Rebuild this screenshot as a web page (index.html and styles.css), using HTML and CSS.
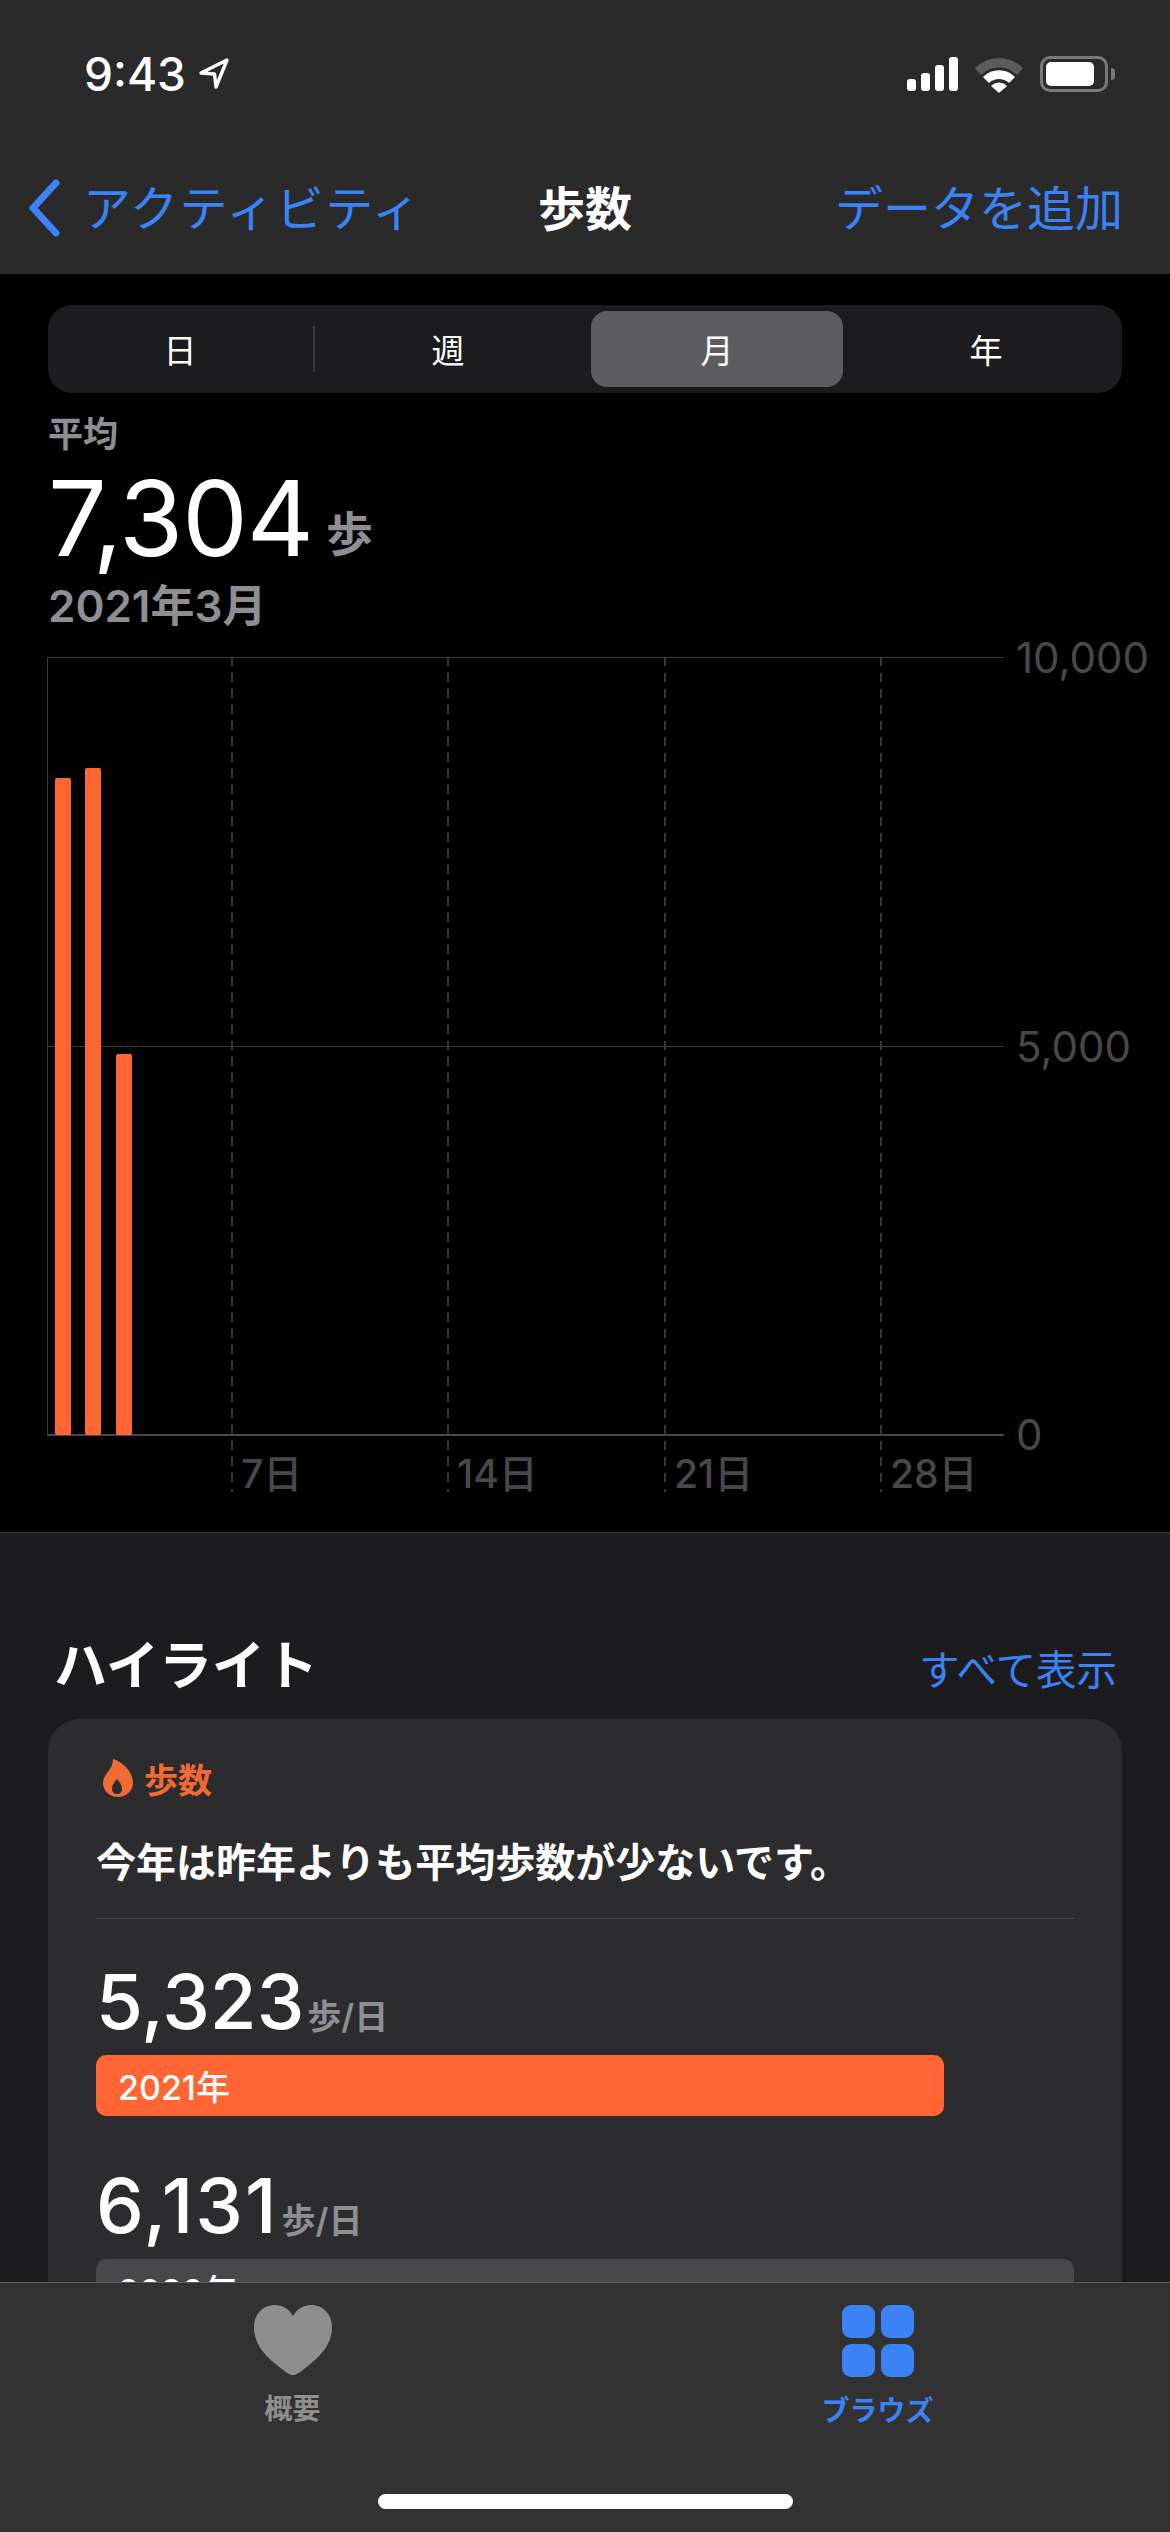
FILE: index.html
```html
<!DOCTYPE html>
<html lang="ja">
<head>
    <meta charset="UTF-8">
    <meta name="viewport" content="width=device-width, initial-scale=1.0">
    <title>歩数</title>
    <link rel="stylesheet" href="styles.css">
</head>
<body>
    <header class="topbar">
        <div class="status">
            <div class="status-time">
                <span>9:43</span>
                <svg width="32" height="32" viewBox="0 0 32 32"><path d="M29 2 L3 15 L16.5 16 L18 29 Z" fill="none" stroke="#fff" stroke-width="3.4" stroke-linejoin="round"/></svg>
            </div>
            <div class="status-icons">
                <div class="signal">
                    <span class="signal-bar signal-1"></span>
                    <span class="signal-bar signal-2"></span>
                    <span class="signal-bar signal-3"></span>
                    <span class="signal-bar signal-4"></span>
                </div>
                <svg class="wifi" width="48" height="37" viewBox="0 0 48 37">
                    <path d="M1 12 A34 34 0 0 1 47 12 L42 18 A26 26 0 0 0 6 18 Z" fill="#5c5c5c" stroke="#5c5c5c" stroke-width="1.5" stroke-linejoin="round"/>
                    <path d="M9 21 A22 22 0 0 1 39 21 L34 26 A15 15 0 0 0 14 26 Z" fill="#fff" stroke="#fff" stroke-width="1.5" stroke-linejoin="round"/>
                    <path d="M17 30 A10 10 0 0 1 31 30 L24 36 Z" fill="#fff" stroke="#fff" stroke-width="1.5" stroke-linejoin="round"/>
                </svg>
                <div class="battery"><span class="battery-fill"></span></div>
                <span class="battery-nub"></span>
            </div>
        </div>
        <nav class="navbar">
            <a class="nav-back">
                <svg width="34" height="58" viewBox="0 0 34 58"><path d="M29 4 L6 29 L29 54" fill="none" stroke="#3b82f6" stroke-width="7" stroke-linecap="round" stroke-linejoin="round"/></svg>
                <span>アクティビティ</span>
            </a>
            <h1 class="nav-title">歩数</h1>
            <a class="nav-add">データを追加</a>
        </nav>
    </header>

    <main class="content">
        <section class="chart-panel">
            <div class="segments">
                <div class="seg seg-day">日</div>
                <span class="seg-sep"></span>
                <div class="seg seg-week">週</div>
                <div class="seg seg-month">月</div>
                <div class="seg seg-year">年</div>
            </div>
            <div class="avg-label">平均</div>
            <div class="avg-value"><span class="avg-num">7,304</span><span class="avg-unit">歩</span></div>
            <div class="avg-date">2021年3月</div>

            <svg class="chart" width="1170" height="900" viewBox="0 0 1170 900">
                <line class="axis" x1="47.5" y1="25" x2="47.5" y2="803"/>
                <line class="grid" x1="47" y1="25.5" x2="1004" y2="25.5"/>
                <line class="grid" x1="47" y1="414.5" x2="1004" y2="414.5"/>
                <line class="grid grid-base" x1="47" y1="803" x2="1004" y2="803"/>
                <line class="dash" x1="232" y1="25" x2="232" y2="860"/>
                <line class="dash" x1="448" y1="25" x2="448" y2="860"/>
                <line class="dash" x1="665" y1="25" x2="665" y2="860"/>
                <line class="dash" x1="881" y1="25" x2="881" y2="860"/>
                <rect class="bar" x="55" y="146" width="16" height="657" rx="2"/>
                <rect class="bar" x="85" y="136" width="16" height="667" rx="2"/>
                <rect class="bar" x="116" y="422" width="16" height="381" rx="2"/>
                <text class="y-label" x="1016" y="41">10,000</text>
                <text class="y-label" x="1016" y="430">5,000</text>
                <text class="y-label" x="1016" y="818">0</text>
                <text class="x-label" x="241" y="856">7日</text>
                <text class="x-label" x="457" y="856">14日</text>
                <text class="x-label" x="674" y="856">21日</text>
                <text class="x-label" x="890" y="856">28日</text>
            </svg>
        </section>

        <section class="highlights">
            <div class="hl-head">
                <h2>ハイライト</h2>
                <a class="hl-all">すべて表示</a>
            </div>
            <div class="card">
                <div class="card-tag">
                    <svg width="30" height="38" viewBox="0 0 30 38"><path fill-rule="evenodd" d="M10 0 C20 3 30 13 30 24 C30 32 23 38 15 38 C7 38 0 32 0 24 C0 15 10 11 10 0 Z M14 20 C17 23 19 27 19 30 C19 33 17 35 14 35 C11 35 9 33 9 30 C9 27 11 23 14 20 Z" fill="#f26a33"/></svg>
                    <span>歩数</span>
                </div>
                <p class="card-text">今年は昨年よりも平均歩数が少ないです。</p>
                <div class="card-line"></div>

                <div class="stat">
                    <div class="stat-row"><span class="stat-num">5,323</span><span class="stat-unit">歩/日</span></div>
                    <div class="stat-bar stat-bar-now">2021年</div>
                </div>
                <div class="stat">
                    <div class="stat-row"><span class="stat-num stat-num-wide">6,131</span><span class="stat-unit">歩/日</span></div>
                    <div class="stat-bar stat-bar-old">2020年</div>
                </div>
            </div>
        </section>
    </main>

    <footer class="tabbar">
        <div class="tabs">
            <div class="tab">
                <svg width="78" height="70" viewBox="0 0 78 70"><path d="M39 70 C36 70 33 68 28 64 C12 52 0 40 0 22 C0 9 9 0 21 0 C29 0 35 4 39 11 C43 4 49 0 57 0 C69 0 78 9 78 22 C78 40 66 52 50 64 C45 68 42 70 39 70 Z" fill="#8e8e8e"/></svg>
                <span class="tab-label">概要</span>
            </div>
            <div class="tab tab-on">
                <div class="browse-icon">
                    <span></span><span></span><span></span><span></span>
                </div>
                <span class="tab-label">ブラウズ</span>
            </div>
        </div>
        <div class="home-bar"></div>
    </footer>
</body>
</html>
```

FILE: styles.css
```css
* { box-sizing: border-box; }
html, body { margin: 0; padding: 0; }
body { width: 1170px; height: 2532px; overflow: hidden; display: flex; flex-direction: column; background: #000; color: #fff; font-family: Inter, "Noto Sans CJK JP", sans-serif; }
h1, h2, p { margin: 0; }

/* top */
.topbar { background: #2a2a2a; height: 274px; flex: none; }
.status { height: 148px; display: flex; justify-content: space-between; align-items: center; padding: 0 55px 0 84px; }
.status-time { display: flex; align-items: center; gap: 12px; font-size: 46px; font-weight: 500; line-height: 1; }
.status-icons { display: flex; align-items: center; }
.signal { display: flex; align-items: flex-end; gap: 5px; height: 34px; margin-right: 17px; }
.signal-bar { width: 9px; background: #fff; border-radius: 3px; }
.signal-1 { height: 12px; }
.signal-2 { height: 18px; }
.signal-3 { height: 26px; }
.signal-4 { height: 34px; }
.wifi { margin-right: 17px; }
.battery { width: 68px; height: 36px; border: 3px solid #7a7a7a; border-radius: 10px; padding: 3px; }
.battery-fill { display: block; width: 48px; height: 24px; background: #fff; border-radius: 5px; }
.battery-nub { width: 4px; height: 12px; margin-left: 3px; background: #7a7a7a; border-radius: 0 6px 6px 0; }

.navbar { height: 126px; padding: 0 47px 12px 27px; display: grid; grid-template-columns: 511px 94px 1fr; align-items: center; }
.nav-back { display: flex; align-items: center; gap: 22px; color: #3b82f6; font-size: 48px; letter-spacing: 1.5px; white-space: nowrap; }
.nav-back svg { margin-top: 6px; }
.nav-title { font-size: 47px; font-weight: 700; }
.nav-add { justify-self: end; color: #3b82f6; font-size: 48px; white-space: nowrap; }

/* chart */
.content { flex: 1; min-height: 0; overflow: hidden; }
.chart-panel { background: #000; height: 1259px; padding-top: 31px; border-bottom: 1px solid #3a3a3c; }
.segments { margin: 0 48px; height: 88px; padding: 6px; background: #1c1c1e; border-radius: 24px; display: flex; align-items: center; font-size: 33px; }
.seg { height: 76px; display: flex; align-items: center; justify-content: center; }
.seg-day { width: 259px; padding-right: 7px; }
.seg-sep { width: 2px; height: 46px; background: #3a3a3c; }
.seg-week { width: 276px; padding-right: 10px; }
.seg-month { width: 252px; background: #5c5c60; border-radius: 16px; }
.seg-year { width: 273px; padding-left: 13px; }

.avg-label { margin: 21px 0 0 48px; font-size: 35px; line-height: 40px; color: #8e8e93; font-weight: 600; }
.avg-value { margin: 6px 0 0 48px; height: 116px; display: flex; align-items: center; }
.avg-num { font-size: 104px; line-height: 116px; letter-spacing: -1px; }
.avg-unit { margin: 24px 0 0 13px; font-size: 47px; color: #8e8e93; font-weight: 600; }
.avg-date { margin: 5px 0 0 48px; font-size: 44px; line-height: 50px; color: #8e8e93; font-weight: 600; }

.chart { display: block; margin-top: 1px; }
.axis { stroke: #3a3a3c; stroke-width: 1; }
.grid { stroke: #3a3a3c; stroke-width: 1; }
.grid-base { stroke: #48484a; stroke-width: 2; }
.dash { stroke: #48484a; stroke-width: 1.5; stroke-dasharray: 9 7; }
.bar { fill: #ff6633; }
.y-label { fill: #48484a; font-size: 42px; }
.x-label { fill: #48484a; font-size: 39px; font-weight: 500; }

/* highlights */
.highlights { background: #1c1c1e; padding: 0 48px; height: 800px; }
.hl-head { height: 186px; padding: 72px 5px 0 6px; display: flex; justify-content: space-between; align-items: center; }
.hl-head h2 { font-size: 53px; font-weight: 700; }
.hl-all { color: #3b82f6; font-size: 40.5px; margin-top: 10px; }
.card { background: #2c2c2e; border-radius: 32px; padding: 36px 48px 0; height: 700px; }
.card-tag { display: flex; align-items: center; gap: 11px; color: #f26a33; font-size: 34px; font-weight: 700; padding-left: 7px; height: 46px; }
.card-text { margin-top: 33px; font-size: 40px; font-weight: 700; line-height: 58px; }
.card-line { margin-top: 26px; height: 1px; background: #48484a; }
.stat { margin-top: 38px; }
.stat + .stat { margin-top: 45px; }
.stat-row { display: flex; align-items: baseline; gap: 3px; height: 98px; }
.stat-num { font-size: 76px; font-weight: 500; line-height: 88px; }
.stat-num-wide { letter-spacing: 2px; }
.stat-unit { font-size: 34px; font-weight: 600; color: #8e8e93; }
.stat-bar { height: 61px; border-radius: 10px; padding-left: 22px; display: flex; align-items: center; font-size: 34px; font-weight: 500; }
.stat-bar-now { width: 848px; background: #ff6633; }
.stat-bar-old { width: 978px; background: #48484a; }

/* tabs */
.tabbar { height: 250px; flex: none; background: #323232; border-top: 1px solid #5a5a5a; }
.tabs { display: flex; height: 211px; }
.tab { width: 50%; display: flex; flex-direction: column; align-items: center; padding-top: 22px; color: #8e8e8e; }
.tab-on { color: #3b82f6; }
.tab-label { margin-top: 18px; font-size: 28px; font-weight: 700; line-height: 32px; }
.browse-icon { display: grid; grid-template-columns: 33px 33px; gap: 6px; }
.browse-icon span { height: 33px; background: #3b82f6; border-radius: 9px; }
.home-bar { width: 415px; height: 15px; margin: 0 auto; background: #fff; border-radius: 8px; }
```
